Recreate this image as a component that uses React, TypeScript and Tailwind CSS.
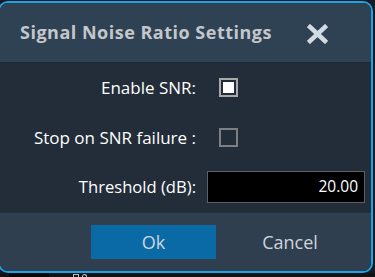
import React from "react";

export default function App() {
  const font = { fontFamily: '"Open Sans", "Noto Sans", Arial, sans-serif' };
  return (
    <div className="w-[375px] h-[277px] overflow-hidden bg-[#151b22] flex flex-col" style={font}>
      <div className="mt-[1px] ml-[-2px] w-[375px] h-[272px] shrink-0 border-2 border-[#1ea3e6] rounded-[10px] overflow-hidden flex flex-col">
        <div className="h-[59px] bg-[#2f4254] flex items-center pl-[20px] shrink-0">
          <span className="w-[287px] text-[18px] font-bold text-[#c3c7cb] tracking-[0.5px]">Signal Noise Ratio Settings</span>
          <svg className="mt-[3px]" width="21" height="20" viewBox="0 0 21 20">
            <path d="M3 3 L18 17 M18 3 L3 17" stroke="#d3dbe2" strokeWidth="4.5" strokeLinecap="square" />
          </svg>
        </div>
        <div className="h-[150px] bg-[#222d39] border-t border-[#1d2731] shrink-0 flex flex-col">
          <div className="flex items-center h-[19px] mt-[15px]">
            <span className="w-[196px] text-right text-[17px] text-white whitespace-nowrap">Enable SNR:</span>
            <div className="ml-[23px] w-[19px] h-[19px] border-2 border-[#a9a9a9] p-[2px] bg-[#222d39]">
              <div className="w-full h-full bg-white" />
            </div>
          </div>
          <div className="flex items-center h-[19px] mt-[31px]">
            <span className="w-[196px] text-right text-[17px] text-white whitespace-nowrap">Stop on SNR failure :</span>
            <div className="ml-[23px] w-[19px] h-[19px] border-2 border-[#7d7f82] bg-[#222d39]" />
          </div>
          <div className="flex items-center h-[32px] mt-[24px]">
            <span className="w-[196px] text-right text-[16.6px] text-white whitespace-nowrap">Threshold (dB):</span>
            <div className="ml-[11px] w-[158px] h-[32px] bg-black border border-[#5c6166] flex items-center justify-end pr-[6px] text-[15.5px] text-white">
              20.00
            </div>
          </div>
        </div>
        <div className="flex-1 bg-[#2f3f4f] border-t border-[#26323e] flex items-center">
          <div className="ml-[91px] w-[125px] h-[34px] bg-[#0a6aa6] flex items-center justify-center text-[18px] text-[#cdd6dd]">
            Ok
          </div>
          <div className="ml-[44px] w-[60px] text-center text-[18px] text-[#cdd4da]">Cancel</div>
        </div>
      </div>
      <div className="flex-1 bg-[#101418] flex">
        <div className="ml-[9px] w-[40px] bg-[#05080a]" />
        <div className="ml-[24px] mt-[1px] w-[6px] h-[3px] border border-[#c0c0c0] border-b-0" />
        <div className="ml-[3px] mt-[1px] w-[5px] h-[3px] border border-[#c0c0c0] border-b-0 rounded-t" />
      </div>
    </div>
  );
}
